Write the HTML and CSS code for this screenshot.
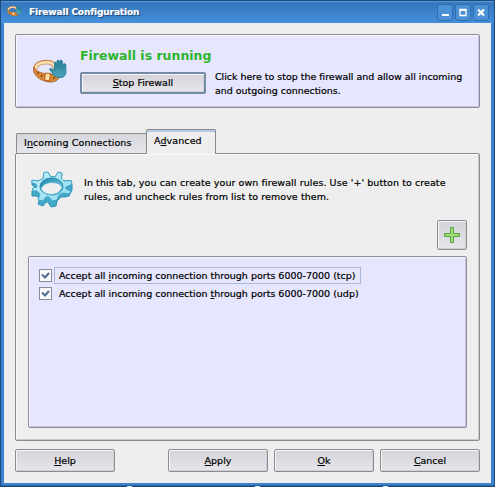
FILE: index.html
```
<!DOCTYPE html>
<html lang="en">
<head>
<meta charset="utf-8">
<title>Firewall Configuration</title>
<link rel="stylesheet" href="styles.css">
</head>
<body>
<svg width="0" height="0" class="defs" aria-hidden="true">
  <defs>
    <linearGradient id="handFill" x1="0" y1="0" x2="0" y2="1"><stop offset="0" stop-color="#257f9a"/><stop offset="1" stop-color="#4fa6bd"/></linearGradient>
    <linearGradient id="gearFill" x1="0" y1="0" x2="1" y2="1"><stop offset="0" stop-color="#c6f0fb"/><stop offset="1" stop-color="#8edaf0"/></linearGradient>
    <linearGradient id="gearHole" x1="0" y1="0" x2="1" y2="1"><stop offset="0" stop-color="#1d86ab"/><stop offset="1" stop-color="#7fd3ea"/></linearGradient>
    <symbol id="guard" viewBox="0 0 34 26">
      <path d="M3 10C2 5 8 3 14 3C19 3 22 5 22.500 11V17" fill="none" stroke="#bd7038" stroke-width="4.500"/>
      <path d="M3 10C2.500 5 8 3.200 14 3.200C19 3.200 21.800 5 22.300 11V17" fill="none" stroke="#fbdcaa" stroke-width="3"/>
      <path d="M.7 8C3 12 8 14.500 14 14.800L26 16V19C23 24 15 24 9 21C3 18.500 -.5 13 .7 8Z" fill="#d98734" stroke="#a9581e" stroke-width=".8"/>
      <path d="M12.500 14L17.500 14.500L16.500 22L11.500 21Z" fill="#ffe0a0" stroke="#b3601c"/>
      <circle cx="5" cy="14" r=".9" fill="#7c3f12"/><circle cx="8.500" cy="17" r=".9" fill="#7c3f12"/><circle cx="21" cy="19" r=".9" fill="#7c3f12"/>
      <path d="M16.500 10C18.500 8.500 20 11 21.500 12V4Q22.300 2.200 23.300 4V9H24V2Q25.300 0 26.300 2V9H27V2Q28.200 .3 29.200 2V9.500H30V5.500Q31.500 3.700 32.800 5.500V14Q32 18.500 27 18.500Q21 18.500 19 13.500Z" fill="url(#handFill)" stroke="#287f99"/>
    </symbol>
  </defs>
</svg>
<main class="window">
  <header class="titlebar">
    <svg class="title-icon"><use href="#guard"/></svg>
    <h1 class="title">Firewall Configuration</h1>
    <div class="controls">
      <svg class="control" viewBox="0 0 14 15"><path d="M4 10H11" stroke="#fff" stroke-width="2"/></svg>
      <svg class="control" viewBox="0 0 14 15"><path d="M3.500 5H10.500M4 4V11M10 4V11M3.500 10.500H10.500" fill="none" stroke="#fff" stroke-width="1.300"/><path d="M3.500 4.800H10.500" stroke="#fff" stroke-width="2"/></svg>
      <svg class="control" viewBox="0 0 14 15"><path d="M4 4.500L10 10.500M10 4.500L4 10.500" stroke="#fff" stroke-width="2.200"/></svg>
    </div>
  </header>
  <div class="body">
    <section class="status">
      <svg class="status-icon"><use href="#guard"/></svg>
      <div class="status-main">
        <h2 class="status-title">Firewall is running</h2>
        <div class="status-row">
          <button class="btn btn-stop"><span><u>S</u>top Firewall</span></button>
          <p class="text">Click here to stop the firewall and allow all incoming<br>and outgoing connections.</p>
        </div>
      </div>
    </section>
    <nav class="tabs">
      <div class="tab">I<u>n</u>coming Connections</div>
      <div class="tab active">A<u>d</u>vanced</div>
    </nav>
    <section class="panel">
      <div class="intro">
        <svg class="gear" viewBox="0 0 42 37">
          <path d="M1 10L8 10L12 8L13 2L17 2L20 6L24 6L27 2L31 3L30 8L33 10L40 9.500L41 14V19L38 25L34 26L30 26L26 30L25 35L20 36L17 31H15L12 35L7 33L9 27L5 25L1 25V20L5 17L1 14Z" fill="#45a8c9" stroke="#2d93b6"/>
          <path d="M1 9L7 10L12 7.500L13 1.500L17 1L20 6H24L27 1L31 2L30.500 7.500L33 10L40 9.500L41 13.500L35 16V18L40 20L38 23L32 22L28 24L26 29L21 30L18 26H15L12 30L7 29L9 23L6 20L1 20L2 17L6 16L5 13L1 12Z" fill="url(#gearFill)" stroke="#3ba5c7"/>
          <ellipse cx="20.500" cy="15.500" rx="11.500" ry="8.500" fill="url(#gearHole)" stroke="#268cae"/>
          <path d="M10 17.500Q13 11.500 21 11.500Q29 11.500 31 16.500Q28 23.500 20.500 23.500Q12 23.500 10 17.500Z" fill="#eeeff0" stroke="#5dbbd6"/>
        </svg>
        <p class="text">In this tab, you can create your own firewall rules. Use '+' button to create<br>rules, and uncheck rules from list to remove them.</p>
      </div>
      <button class="btn btn-add" aria-label="Add rule">
        <svg width="18" height="18" viewBox="0 0 18 18"><path d="M7.500 1.500H10.500V7.500H16.500V10.500H10.500V16.500H7.500V10.500H1.500V7.500H7.500Z" fill="#a0de78" stroke="#52a33c"/></svg>
      </button>
      <ul class="rules">
        <li class="rule focused"><span class="check"><svg viewBox="0 0 11 11"><path d="M2 4.500L5 7.500L9 3" /></svg></span><span class="rule-label">Accept all <u>i</u>ncoming connection through ports 6000-7000 (tcp)</span></li>
        <li class="rule"><span class="check"><svg viewBox="0 0 11 11"><path d="M2 4.500L5 7.500L9 3" /></svg></span><span class="rule-label">Accept all incoming connection <u>t</u>hrough ports 6000-7000 (udp)</span></li>
      </ul>
    </section>
    <footer class="actions">
      <button class="btn help"><span><u>H</u>elp</span></button>
      <button class="btn"><span><u>A</u>pply</span></button>
      <button class="btn"><span><u>O</u>k</span></button>
      <button class="btn"><span><u>C</u>ancel</span></button>
    </footer>
  </div>
</main>
<div class="edge"><i></i><i></i><i></i></div>
</body>
</html>
```
FILE: styles.css
```
* { box-sizing: border-box; }
body {
  margin: 0;
  width: 495px;
  height: 487px;
  overflow: hidden;
  background: #1d4878;
  font: 9.5px/14px "DejaVu Sans", sans-serif;
  color: #000;
  -webkit-text-stroke: 0.2px;
}
h1, h2, p, ul { margin: 0; padding: 0; }
u { text-underline-offset: 1px; text-decoration-thickness: 1px; text-decoration-skip-ink: none; }
.defs { position: absolute; }
.window {
  width: 495px;
  height: 486px;
  border: 1px solid #1b4c80;
  border-bottom: 0;
  border-radius: 4px 4px 0 0;
  background: #3b84cd;
  box-shadow: inset 0 -1px #2a66a4;
  padding: 0 3px 3px;
  display: flex;
  flex-direction: column;
}
.titlebar {
  height: 22px;
  flex: none;
  margin: 0 -3px;
  padding: 3px 5px 0 6px;
  display: flex;
  background: linear-gradient(#5b9bdc 0, #3576bb 2px, #448fdc);
}
.title-icon { width: 15px; height: 15px; }
.title {
  flex: 1;
  margin-left: 7px;
  font: bold 9px/16px "DejaVu Sans", sans-serif;
  letter-spacing: -0.12px;
  color: #fff;
  text-shadow: 1px 1px 1px #163f70;
}
.controls { display: flex; gap: 2px; }
.control { width: 16px; height: 17px; border: 1px solid #2f6db0; border-radius: 3px; background: #4c90d5; }
.body { flex: 1; background: #eee; padding: 11px 11px 11px; display: flex; flex-direction: column; }
.status {
  width: 465px;
  height: 74px;
  flex: none;
  border: 1px solid #8c8a9c;
  border-radius: 2px;
  background: #e6e6ff;
  box-shadow: inset 1px 1px #f7f7ff, inset -1px -1px #c8c8dc;
  display: flex;
  padding: 13px 0 0 17px;
}
.status-icon { width: 34px; height: 26px; margin-top: 11px; }
.status-main { margin-left: 13px; }
.status-title { font: bold 12.5px/16px "DejaVu Sans", sans-serif; color: #2cb52c; -webkit-text-stroke: 0; }
.status-row { display: flex; gap: 9px; margin-top: 8px; }
.status-row .text { margin-top: -2px; letter-spacing: -0.025px; }
.btn {
  height: 23px;
  border: 1px solid #8b8b91;
  border-radius: 2px;
  background: linear-gradient(#d3d3d9, #e5e5ea);
  box-shadow: inset 1px 1px #f6f6f8, inset -1px -1px #cfcfd5;
  font: inherit;
  color: inherit;
  padding: 0;
}
.btn-stop { width: 126px; height: 22px; border: 2px solid #748aa6; }
.text { white-space: nowrap; }
.tabs { display: flex; align-items: flex-end; height: 24px; margin-top: 21px; padding-left: 1px; flex: none; }
.tab {
  height: 20px;
  width: 130px;
  border: 1px solid #8b8b8f;
  border-radius: 2px 0 0 0;
  border-right: 0;
  border-bottom: 0;
  background: linear-gradient(#d6d6dd, #e5e5eb);
  padding: 2px 0 0 7px;
  letter-spacing: 0.1px;
  white-space: nowrap;
}
.tab.active {
  width: 70px;
  height: 25px;
  margin-bottom: -1px;
  border-right: 1px solid #8b8b8f;
  border-radius: 2px 2px 0 0;
  background: #eee;
  box-shadow: inset 0 2px #b4c7e3;
  padding-top: 4px;
  position: relative;
}
.panel {
  width: 465px;
  height: 288px;
  flex: none;
  border: 1px solid #8b8b8f;
  border-radius: 2px;
  box-shadow: inset 1px 1px #fafafa, inset -1px -1px #ccc;
  padding: 17px 12px 12px;
  display: flex;
  flex-direction: column;
}
.intro { display: flex; gap: 11px; padding-left: 3px; height: 49px; flex: none; }
.gear { width: 42px; height: 37px; }
.intro .text { padding-top: 5px; letter-spacing: 0.08px; }
.btn-add { width: 30px; height: 30px; align-self: flex-end; flex: none; display: grid; place-items: center; }
.rules {
  list-style: none;
  width: 439px;
  height: 172px;
  margin-top: 6px;
  border: 1px solid #8c8a9c;
  border-radius: 2px;
  background: #e6e6ff;
  box-shadow: inset 1px 1px #f7f7ff, inset -1px -1px #c8c8dc;
  padding: 9px 10px;
}
.rule { display: flex; align-items: center; height: 18px; gap: 2px; }
.check { width: 13px; height: 13px; border: 1px solid #8b8b94; background: #fafafe; display: flex; }
.check svg { width: 11px; height: 11px; }
.check path { fill: none; stroke: #4b6b90; stroke-width: 2; }
.rule-label { height: 17px; line-height: 15px; border: 1px solid transparent; padding: 0 4px; white-space: nowrap; }
.focused .rule-label { border-color: #a9b9dc; }
.actions { display: flex; gap: 6px; margin-top: 8px; }
.actions .btn { width: 100px; }
.actions .help { margin-right: 47px; }
.edge { display: flex; gap: 123px; padding-left: 127px; height: 1px; }
.edge i { width: 5px; background: #dce4ee; }
```
